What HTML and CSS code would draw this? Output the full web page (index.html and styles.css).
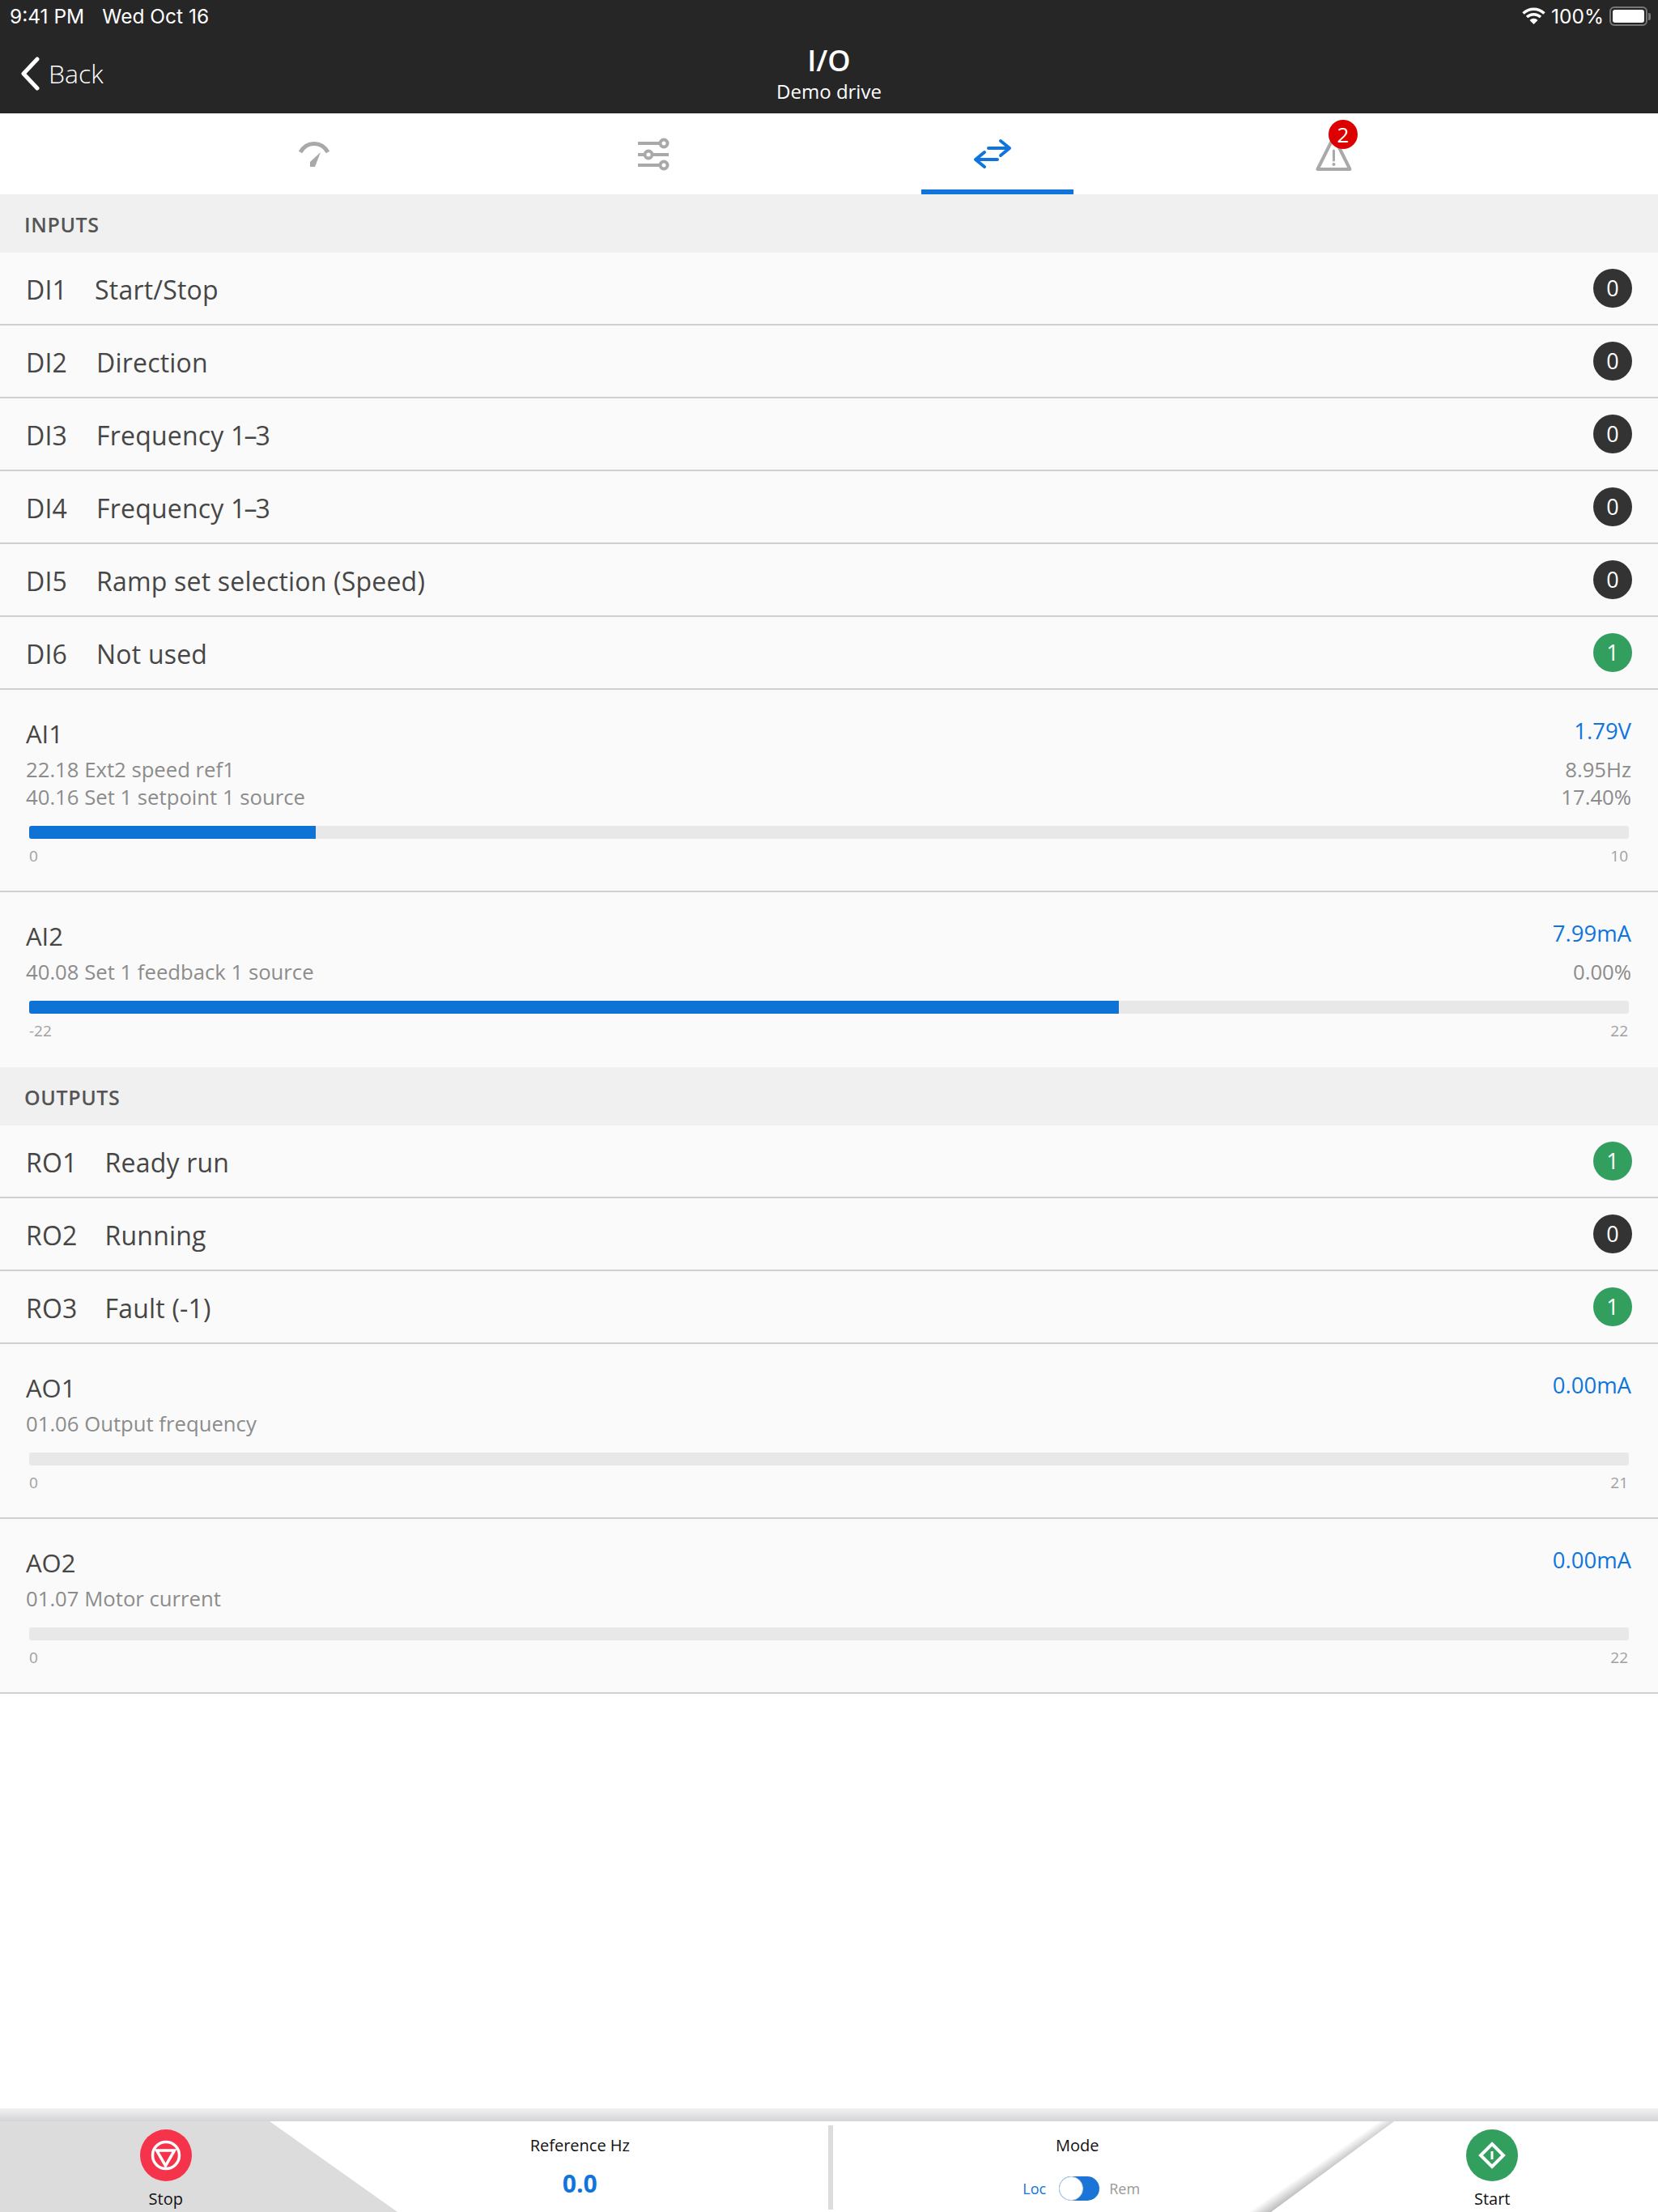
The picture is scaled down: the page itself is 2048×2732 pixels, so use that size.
FILE: index.html
```html
<!DOCTYPE html>
<html lang="en">
<head>
  <meta charset="UTF-8" />
  <meta name="viewport" content="width=device-width, initial-scale=1.0" />
  <title>I/O</title>
  <link rel="stylesheet" href="styles.css">
</head>
<body>
  <div class="app">
    <header class="header">
      <div class="status">
        <div class="status-left"><span>9:41 PM</span><span>Wed Oct 16</span></div>
        <div class="status-right">
          <svg class="wifi" width="29" height="24" viewBox="0 0 29 24">
            <path d="M1.5 8.5C9 1.5 20 1.5 27.5 8.5M6 13C11 8.5 18 8.5 23 13" fill="none" stroke="#fff" stroke-width="3.5"/>
            <path d="M9.5 17C12.5 14 16.5 14 19.5 17L14.5 22Z" fill="#fff"/>
          </svg>
          <span>100%</span>
          <div class="battery"><div class="battery-fill"></div></div>
          <div class="battery-tip"></div>
        </div>
      </div>
      <div class="nav">
        <div class="back">
          <svg width="26" height="42" viewBox="0 0 26 42">
            <path d="M22 3L5 21L22 39" fill="none" stroke="#fff" stroke-width="5" stroke-linecap="round" stroke-linejoin="round"/>
          </svg>
          <span>Back</span>
        </div>
        <div class="nav-title">
          <div class="title">I/O</div>
          <div class="subtitle">Demo drive</div>
        </div>
      </div>
    </header>

    <nav class="tabs">
      <div class="tab">
        <svg width="80" height="60" viewBox="0 0 80 60">
          <path d="M20 28C28 14 46 14 54 28" fill="none" stroke="#a9a9a9" stroke-width="5"/>
          <path d="M45 28L38 46H32V40Z" fill="#a9a9a9"/>
        </svg>
      </div>
      <div class="tab">
        <svg width="80" height="60" viewBox="0 0 80 60">
          <g fill="none" stroke="#a9a9a9" stroke-width="4">
            <path d="M17 17H45M17 31H26M35 31H55M17 44H45"/>
            <circle cx="49" cy="17" r="4.5"/>
            <circle cx="30" cy="31" r="4.5"/>
            <circle cx="49" cy="44" r="4.5"/>
          </g>
        </svg>
      </div>
      <div class="tab active">
        <svg width="80" height="60" viewBox="0 0 80 60">
          <path d="M30 23H55M45 14L56 23L45 32M41 37H15M25 28L14 37L25 46" fill="none" stroke="#0f75dc" stroke-width="4" stroke-linecap="round" stroke-linejoin="round"/>
        </svg>
      </div>
      <div class="tab">
        <svg width="80" height="60" viewBox="0 0 80 60">
          <path d="M36.5 9L56.5 49H16.5Z" fill="none" stroke="#a9a9a9" stroke-width="4" stroke-linejoin="round"/>
          <path d="M36.5 26V38" stroke="#a9a9a9" stroke-width="3" stroke-linecap="round"/>
          <circle cx="36.5" cy="43" r="2" fill="#a9a9a9"/>
        </svg>
        <span class="tab-badge">2</span>
      </div>
    </nav>

    <main class="list">
      <div class="section">INPUTS</div>
      <div class="row"><div class="row-text"><span class="tight">DI1</span><span>Start/Stop</span></div><span class="state">0</span></div>
      <div class="row"><div class="row-text"><span>DI2</span><span>Direction</span></div><span class="state">0</span></div>
      <div class="row"><div class="row-text"><span>DI3</span><span>Frequency <span class="range">1–3</span></span></div><span class="state">0</span></div>
      <div class="row"><div class="row-text"><span>DI4</span><span>Frequency <span class="range">1–3</span></span></div><span class="state">0</span></div>
      <div class="row"><div class="row-text"><span>DI5</span><span>Ramp set selection (Speed)</span></div><span class="state">0</span></div>
      <div class="row"><div class="row-text"><span>DI6</span><span>Not used</span></div><span class="state on">1</span></div>

      <div class="analog tall">
        <div class="analog-head"><span class="analog-name">AI1</span><span class="analog-value">1.79V</span></div>
        <div class="analog-sub"><span>22.18 Ext2 speed ref1</span><span>8.95Hz</span></div>
        <div class="analog-sub"><span>40.16 Set 1 setpoint 1 source</span><span>17.40%</span></div>
        <div class="bar"><div class="bar-fill" style="width: 17.9%"></div></div>
        <div class="scale"><span>0</span><span>10</span></div>
      </div>
      <div class="analog flush">
        <div class="analog-head"><span class="analog-name">AI2</span><span class="analog-value">7.99mA</span></div>
        <div class="analog-sub"><span>40.08 Set 1 feedback 1 source</span><span>0.00%</span></div>
        <div class="bar"><div class="bar-fill" style="width: 68.1%"></div></div>
        <div class="scale"><span>-22</span><span>22</span></div>
      </div>

      <div class="section">OUTPUTS</div>
      <div class="row output"><div class="row-text"><span>RO1</span><span>Ready run</span></div><span class="state on">1</span></div>
      <div class="row output"><div class="row-text"><span>RO2</span><span>Running</span></div><span class="state">0</span></div>
      <div class="row output"><div class="row-text"><span>RO3</span><span>Fault (-1)</span></div><span class="state on">1</span></div>

      <div class="analog">
        <div class="analog-head"><span class="analog-name">AO1</span><span class="analog-value">0.00mA</span></div>
        <div class="analog-sub"><span>01.06 Output frequency</span></div>
        <div class="bar"></div>
        <div class="scale"><span>0</span><span>21</span></div>
      </div>
      <div class="analog">
        <div class="analog-head"><span class="analog-name">AO2</span><span class="analog-value">0.00mA</span></div>
        <div class="analog-sub"><span>01.07 Motor current</span></div>
        <div class="bar"></div>
        <div class="scale"><span>0</span><span>22</span></div>
      </div>
    </main>

    <footer class="footer">
      <div class="footer-shadow"></div>
      <div class="controls">
        <div class="stop-bg"></div>
        <svg class="start-edge" width="190" height="112" viewBox="0 0 190 112">
          <defs>
            <linearGradient id="edge" gradientUnits="userSpaceOnUse" x1="164" y1="0" x2="173" y2="13">
              <stop offset="0" stop-color="#ffffff"/>
              <stop offset="1" stop-color="#bcbcbc"/>
            </linearGradient>
          </defs>
          <polygon points="164,0 182,0 30,112 0,112" fill="url(#edge)"/>
        </svg>
        <div class="action">
          <svg width="64" height="64" viewBox="0 0 64 64">
            <circle cx="32" cy="32" r="32" fill="#f5334a"/>
            <circle cx="32" cy="32" r="16.5" fill="none" stroke="#fff" stroke-width="3.5"/>
            <path d="M20.5 26H42.5L31.5 45Z" fill="none" stroke="#fff" stroke-width="3.5"/>
          </svg>
          <span>Stop</span>
        </div>
        <div class="readout">
          <span class="readout-label">Reference Hz</span>
          <span class="readout-value">0.0</span>
        </div>
        <div class="divider"></div>
        <div class="readout">
          <span class="readout-label">Mode</span>
          <div class="mode">
            <span class="mode-loc">Loc</span>
            <div class="toggle"><div class="toggle-knob"></div></div>
            <span class="mode-rem">Rem</span>
          </div>
        </div>
        <div class="action">
          <svg width="64" height="64" viewBox="0 0 64 64">
            <circle cx="32" cy="32" r="32" fill="#339f5f"/>
            <path d="M32 18L46 32L32 46L18 32Z" fill="none" stroke="#fff" stroke-width="4"/>
            <path d="M32 27V37" stroke="#fff" stroke-width="3"/>
          </svg>
          <span>Start</span>
        </div>
      </div>
    </footer>
  </div>
</body>
</html>
```

FILE: styles.css
```css
* {
  margin: 0;
  padding: 0;
  box-sizing: border-box;
}

body {
  font-family: "Open Sans", "Noto Sans", sans-serif;
  background: #fff;
  color: #464646;
}

.app {
  width: 2048px;
  height: 2732px;
  display: flex;
  flex-direction: column;
  overflow: hidden;
}

/* header */
.header {
  height: 140px;
  background: #262626;
  color: #fff;
}

.status {
  height: 40px;
  padding: 0 9px 0 12px;
  display: flex;
  justify-content: space-between;
  align-items: center;
  font-family: Inter, sans-serif;
  font-size: 24.5px;
}

.status-left {
  display: flex;
  gap: 22px;
}

.status-right {
  display: flex;
  align-items: center;
  gap: 7px;
}

.battery {
  width: 47px;
  height: 24px;
  padding: 2px;
  border: 2px solid #777;
  border-radius: 6px;
}

.battery-fill {
  height: 100%;
  background: #fff;
  border-radius: 3px;
}

.battery-tip {
  width: 3px;
  height: 9px;
  margin-left: -6px;
  background: #777;
  border-radius: 0 2px 2px 0;
}

.nav {
  height: 100px;
  position: relative;
  display: flex;
  align-items: center;
  justify-content: center;
}

.back {
  position: absolute;
  left: 24px;
  top: 29px;
  display: flex;
  align-items: center;
  gap: 10px;
  font-size: 32px;
  font-weight: 300;
}

.nav-title {
  padding-top: 4px;
  text-align: center;
}

.title {
  font-size: 36px;
  font-weight: 600;
  line-height: 42px;
}

.subtitle {
  font-size: 24px;
  line-height: 34px;
}

/* tabs */
.tabs {
  height: 100px;
  padding-left: 177px;
  display: grid;
  grid-template-columns: repeat(4, 420px);
  background: #fff;
}

.tab {
  position: relative;
  display: flex;
  justify-content: center;
  padding: 20px 0 0 7px;
}

.tab svg {
  display: block;
}

.tab.active::after {
  content: "";
  position: absolute;
  left: 121px;
  bottom: 0;
  width: 188px;
  height: 6px;
  background: #0f75dc;
}

.tab-badge {
  position: absolute;
  left: 204px;
  top: 8px;
  width: 36px;
  height: 36px;
  border-radius: 50%;
  background: #dd0000;
  color: #fff;
  font-size: 26px;
  line-height: 36px;
  text-align: center;
}

/* list */
.list {
  flex: 1;
}

.section {
  height: 72px;
  padding: 2px 0 0 30px;
  background: #f0f0f0;
  font-size: 25px;
  font-weight: 600;
  letter-spacing: 0.6px;
  line-height: 70px;
  color: #555;
}

.row {
  height: 90px;
  padding: 0 32px;
  display: flex;
  align-items: center;
  justify-content: space-between;
  background: #fafafa;
  border-bottom: 2px solid #d0d0d0;
}

.row-text {
  padding-top: 2px;
  display: flex;
  gap: 36px;
  font-size: 32px;
  letter-spacing: 0.2px;
}

.row-text .tight {
  margin-right: -2px;
}

.row.output .row-text {
  gap: 34px;
}

.range {
  letter-spacing: -2px;
}

.state {
  width: 48px;
  height: 48px;
  border-radius: 50%;
  background: #333;
  color: #fff;
  font-size: 27px;
  font-weight: 500;
  line-height: 48px;
  text-align: center;
}

.state.on {
  background: #339f5f;
}

.analog {
  padding: 38px 33px 0 32px;
  background: #fafafa;
  border-bottom: 2px solid #d0d0d0;
  height: 216px;
}

.analog.tall {
  height: 250px;
}

.analog.flush {
  border-bottom: none;
}

.analog-head {
  height: 34px;
  margin-bottom: 11px;
  display: flex;
  justify-content: space-between;
}

.analog-name {
  font-size: 31px;
  line-height: 32px;
}

.analog-value {
  font-size: 27.5px;
  line-height: 26px;
  color: #0f75dc;
}

.analog-sub {
  height: 34px;
  display: flex;
  justify-content: space-between;
  font-size: 25.7px;
  line-height: 32px;
  color: #8c8c8c;
}

.bar {
  height: 16px;
  margin: 17px 3px 0 4px;
  background: #e8e8e8;
  border-radius: 3px;
  overflow: hidden;
}

.bar-fill {
  height: 100%;
  background: #0f72d6;
}

.scale {
  margin: 9px 4px 0;
  display: flex;
  justify-content: space-between;
  font-size: 19px;
  line-height: 24px;
  color: #a0a0a0;
}

/* footer */
.footer {
  height: 128px;
  display: flex;
  flex-direction: column;
}

.footer-shadow {
  height: 16px;
  background: linear-gradient(to bottom, #f1f1f4, #d4d4d8);
}

.controls {
  position: relative;
  height: 112px;
  display: flex;
  background: #fff;
  color: #111;
  font-size: 20px;
}

.stop-bg {
  position: absolute;
  left: 0;
  top: 0;
  width: 491px;
  height: 112px;
  background: #dcdcdc;
  clip-path: polygon(0 0, 333px 0, 491px 112px, 0 112px);
}

.start-edge {
  position: absolute;
  left: 1540px;
  top: 0;
}

.action {
  position: relative;
  width: 410px;
  padding-top: 10px;
  display: flex;
  flex-direction: column;
  align-items: center;
  gap: 8px;
}

.action svg {
  display: block;
}

.readout {
  position: relative;
  width: 614px;
  padding-top: 18px;
  display: flex;
  flex-direction: column;
  align-items: center;
}

.divider {
  width: 6px;
  height: 104px;
  margin-top: 5px;
  background: #dcdcdc;
}

.readout + .divider + .readout {
  width: 604px;
  margin-right: 6px;
}

.readout-label {
  line-height: 24px;
}

.readout-value {
  margin-top: 17px;
  font-size: 30px;
  font-weight: 700;
  line-height: 36px;
  color: #0f75dc;
}

.mode {
  margin-top: 26px;
  padding-left: 10px;
  display: flex;
  align-items: center;
  font-size: 18px;
}

.mode-loc {
  margin-right: 16px;
  color: #0f75dc;
}

.mode-rem {
  margin-left: 12px;
  color: #999;
}

.toggle {
  width: 50px;
  height: 30px;
  display: flex;
  align-items: center;
  background: #1c75d6;
  border-radius: 15px;
}

.toggle-knob {
  width: 30px;
  height: 30px;
  background: #fff;
  border: 1px solid #c8d4e2;
  border-radius: 50%;
}
```
